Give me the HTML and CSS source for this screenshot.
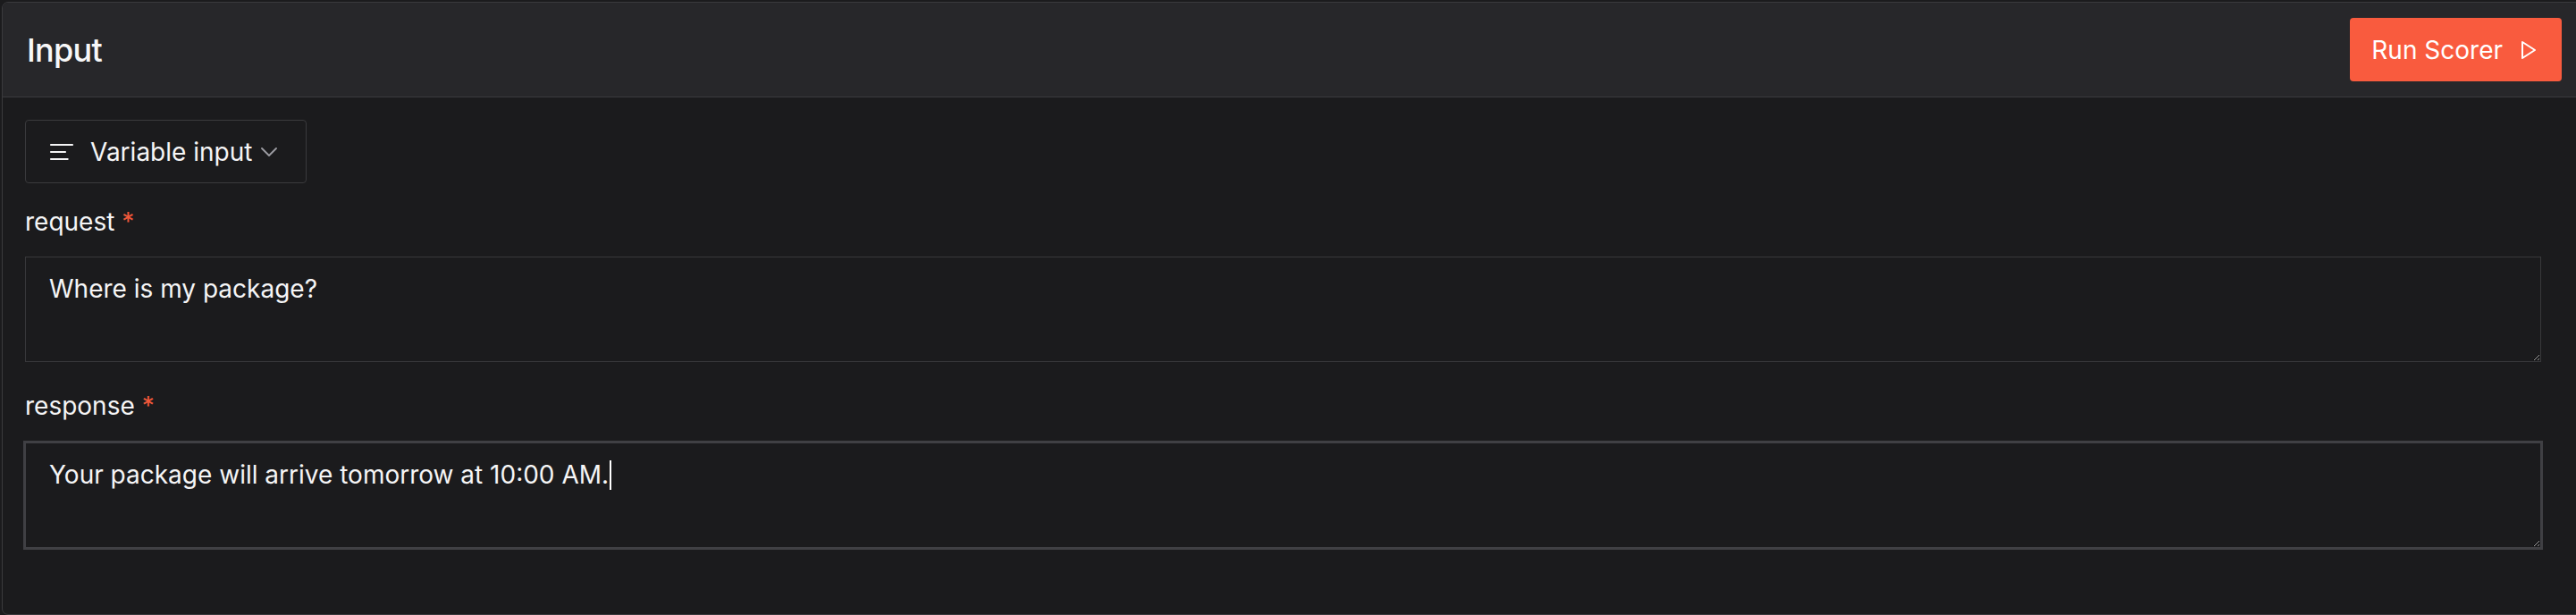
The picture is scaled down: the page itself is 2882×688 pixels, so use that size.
FILE: index.html
```html
<!DOCTYPE html>
<html lang="en">
<head>
<meta charset="utf-8">
<title>Input</title>
<link rel="stylesheet" href="styles.css">
</head>
<body>
<section class="panel">
  <header class="panel-header">
    <h1 class="panel-title">Input</h1>
    <button class="run-btn" type="button">
      <span>Run Scorer</span>
      <svg class="run-icon" viewBox="0 0 24 24" width="24" height="24" fill="none" stroke="currentColor" stroke-width="2" stroke-linejoin="round" stroke-linecap="round"><polygon points="6 3 20 12 6 21 6 3"/></svg>
    </button>
  </header>
  <div class="panel-body">
    <button class="mode-select" type="button">
      <svg class="mode-icon" viewBox="0 0 24 24" width="32" height="32" fill="none" stroke="currentColor" stroke-width="1.6" stroke-linecap="round"><path d="M21 6H3"/><path d="M15 12H3"/><path d="M17 18H3"/></svg>
      <span>Variable input</span>
      <svg class="chevron" viewBox="0 0 18 10" width="18" height="10" fill="none" stroke="currentColor" stroke-width="1.8" stroke-linecap="round" stroke-linejoin="round"><polyline points="1,1 9,9 17,1"/></svg>
    </button>

    <div class="field field-first">
      <label class="field-label">request <span class="req">*</span></label>
      <div class="textbox">Where is my package?</div>
    </div>

    <div class="field">
      <label class="field-label">response <span class="req">*</span></label>
      <div class="textbox textbox-focus">Your package will arrive tomorrow at 10:00 AM.<span class="caret"></span></div>
    </div>
  </div>
</section>
</body>
</html>
```
FILE: styles.css
```css
html, body {
  margin: 0;
  padding: 0;
  background: #1b1b1d;
  overflow: hidden;
}

body {
  font-family: Inter, "Noto Sans", "Liberation Sans", sans-serif;
  color: #f5f5f6;
}

.panel {
  box-sizing: border-box;
  margin: 2px 0 0 2px;
  width: 2893px;
  height: 686px;
  border: 1px solid #3a3a3d;
  border-radius: 7px;
  background: #1b1b1d;
  overflow: hidden;
}

.panel-header {
  display: flex;
  align-items: center;
  justify-content: space-between;
  padding: 17px 28px 17px 27px;
  background: #27272a;
  border-bottom: 1px solid #3a3a3d;
}

.panel-title {
  margin: 0;
  font-size: 36px;
  line-height: 40px;
  font-weight: 500;
  letter-spacing: -0.7px;
  color: #f7f7f8;
}

.run-btn {
  display: flex;
  align-items: center;
  gap: 16px;
  height: 71px;
  padding: 0 26px 0 24px;
  border: none;
  border-radius: 4px;
  background: #f95b3e;
  color: #ffffff;
  font-family: inherit;
  font-size: 28px;
  font-weight: 400;
}

.run-icon {
  display: block;
}

.panel-body {
  padding: 25px 51px 0 25px;
}

.mode-select {
  display: inline-flex;
  align-items: center;
  height: 71px;
  padding: 0 32px 0 24px;
  border: 1px solid #3a3a3d;
  border-radius: 4px;
  background: transparent;
  color: #f5f5f6;
  font-family: inherit;
  font-size: 28px;
}

.mode-icon {
  display: block;
  margin-right: 16px;
}

.chevron {
  display: block;
  margin-left: 10px;
  color: #9d9da3;
}

.field {
  margin-top: 29px;
}

.field-first {
  margin-top: 23px;
}

.field-label {
  display: block;
  font-size: 28px;
  line-height: 40px;
  margin-bottom: 19px;
  color: #f5f5f6;
}

.req {
  color: #f0583a;
}

.textbox {
  box-sizing: border-box;
  height: 118px;
  padding: 15px 26px;
  border: 1px solid #38383b;
  font-size: 28px;
  line-height: 40px;
  color: #f5f5f6;
  resize: vertical;
  overflow: auto;
}

.textbox-focus {
  border-color: #404044;
  box-shadow: 0 0 0 2px #404044;
  margin-top: 21px;
}

.field + .field .field-label {
  margin-bottom: 0;
}

.caret {
  display: inline-block;
  width: 2px;
  height: 33px;
  margin-left: 1px;
  vertical-align: -7px;
  background: #ffffff;
}
```
